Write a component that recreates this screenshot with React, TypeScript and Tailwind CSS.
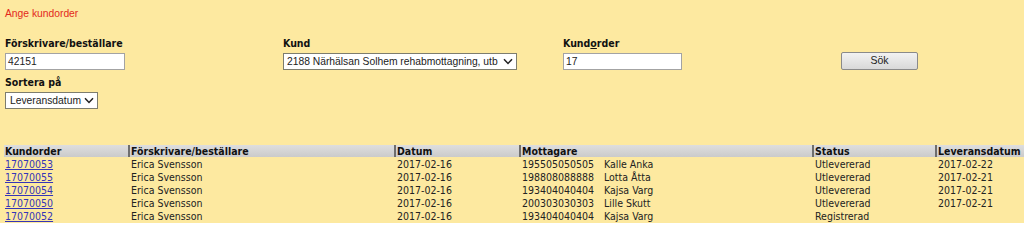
import React from "react";

const tah = { fontFamily: '"DejaVu Sans Condensed", "DejaVu Sans", sans-serif' };
const ari = { fontFamily: '"Liberation Sans", Arial, sans-serif' };

function Chevron() {
  return (
    <svg width="10" height="7" viewBox="0 0 10 7" className="shrink-0">
      <path d="M1 1.2 L5 5.4 L9 1.2" fill="none" stroke="#222" strokeWidth="1.5" />
    </svg>
  );
}

const rows = [
  ["17070053", "Erica Svensson", "2017-02-16", "195505050505", "Kalle Anka", "Utlevererad", "2017-02-22"],
  ["17070055", "Erica Svensson", "2017-02-16", "198808088888", "Lotta Åtta", "Utlevererad", "2017-02-21"],
  ["17070054", "Erica Svensson", "2017-02-16", "193404040404", "Kajsa Varg", "Utlevererad", "2017-02-21"],
  ["17070050", "Erica Svensson", "2017-02-16", "200303030303", "Lille Skutt", "Utlevererad", "2017-02-21"],
  ["17070052", "Erica Svensson", "2017-02-16", "193404040404", "Kajsa Varg", "Registrerad", ""],
];

export default function App() {
  return (
    <div className="w-[1024px] h-[223px] overflow-hidden bg-[#fde9a0] text-[#111]">
      <div className="pl-[5px] pt-[7px]">
        <div style={ari} className="text-[10.3px] leading-[13px] text-[#e3281b]">Ange kundorder</div>

        <div className="mt-[17px] grid grid-cols-[278px_280px_278px_auto] items-end">
          <div>
            <div style={tah} className="text-[10.5px] leading-[13px] font-bold">Förskrivare/beställare</div>
            <div className="mt-[3px] w-[120px] h-[17px] border border-[#a3a3a3] bg-white flex items-center pl-[2px]">
              <span style={ari} className="text-[10.3px] text-[#222]">42151</span>
            </div>
          </div>
          <div>
            <div style={tah} className="text-[10.5px] leading-[13px] font-bold">Kund</div>
            <div className="mt-[3px] w-[234px] h-[17px] border border-[#7d7d6e] bg-white flex items-center pl-[3px] pr-[3px] justify-between">
              <span style={ari} className="text-[10.3px] text-[#222] whitespace-nowrap">2188 Närhälsan Solhem rehabmottagning, utb</span>
              <Chevron />
            </div>
          </div>
          <div>
            <div style={tah} className="text-[10.5px] leading-[13px] font-bold">
              Kund<span className="underline">o</span>rder
            </div>
            <div className="mt-[3px] w-[119px] h-[17px] border border-[#a3a3a3] bg-white flex items-center pl-[2px]">
              <span style={ari} className="text-[10.3px] text-[#222]">17</span>
            </div>
          </div>
          <div className="flex">
            <div
              style={ari}
              className="w-[77px] h-[18px] border border-[#8a8a8a] rounded-[2px] bg-gradient-to-b from-[#f2f2f2] to-[#d9d9d9] flex items-center justify-center text-[10.5px] text-[#222]"
            >
              Sök
            </div>
          </div>
        </div>

        <div className="mt-[6px]">
          <div style={tah} className="text-[10.5px] leading-[13px] font-bold">Sortera på</div>
          <div className="mt-[3px] w-[93px] h-[17px] border border-[#7d7d6e] bg-white flex items-center pl-[4px] pr-[3px] justify-between">
            <span style={ari} className="text-[10.3px] text-[#222]">Leveransdatum</span>
            <Chevron />
          </div>
        </div>
      </div>

      <div className="mt-[36px] ml-[4px]">
        <div style={tah} className="grid grid-cols-[124px_266px_125px_293px_123px_89px] text-[10.5px]">
          {["Kundorder", "Förskrivare/beställare", "Datum", "Mottagare", "Status", "Leveransdatum"].map((h, i) => (
            <div
              key={h}
              className={
                "h-[12px] leading-[12px] font-bold bg-gradient-to-b from-[#dedede] to-[#cbcbcb] whitespace-nowrap " +
                (i === 0 ? "pl-[1px]" : "pl-[1px] border-l-2 border-[#6e6e6e]")
              }
            >
              {h}
            </div>
          ))}
          {rows.map((r) => (
            <React.Fragment key={r[0]}>
              <div className="h-[13px] leading-[13px] pl-[1px] pt-[1px]">
                <span className="text-[#3535b8] underline">{r[0]}</span>
              </div>
              <div className="h-[13px] leading-[13px] pl-[3px] pt-[1px] text-[#222]">{r[1]}</div>
              <div className="h-[13px] leading-[13px] pl-[3px] pt-[1px] text-[#222]">{r[2]}</div>
              <div className="h-[13px] leading-[13px] pl-[3px] pt-[1px] text-[#222] flex whitespace-nowrap">
                <span className="w-[82px]">{r[3]}</span>
                <span>{r[4]}</span>
              </div>
              <div className="h-[13px] leading-[13px] pl-[3px] pt-[1px] text-[#222]">{r[5]}</div>
              <div className="h-[13px] leading-[13px] pl-[3px] pt-[1px] text-[#222]">{r[6]}</div>
            </React.Fragment>
          ))}
        </div>
      </div>
    </div>
  );
}
